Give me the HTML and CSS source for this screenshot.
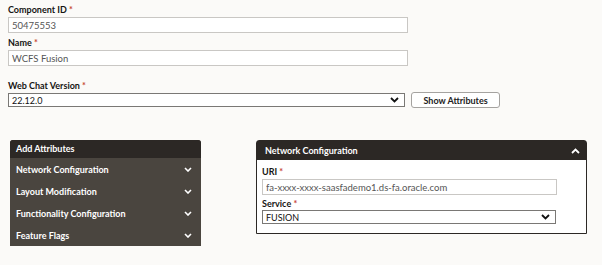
FILE: index.html
```html
<!DOCTYPE html>
<html lang="en">
<head>
<meta charset="UTF-8">
<title>Web Chat Settings</title>
<link rel="stylesheet" href="styles.css">
</head>
<body>

<div class="form">
    <div class="form-group">
        <label for="componentId">Component ID <span class="req">*</span></label>
        <input type="text" id="componentId" class="text-input" value="50475553">
    </div>
    <div class="form-group">
        <label for="name">Name <span class="req">*</span></label>
        <input type="text" id="name" class="text-input" value="WCFS Fusion">
    </div>
    <div class="form-group version-group">
        <label for="version">Web Chat Version <span class="req">*</span></label>
        <div class="version-row">
            <div class="select-box version-select">
                <span>22.12.0</span>
                <svg class="chev" width="9" height="6" viewBox="0 0 9 6"><path d="M1 1l3.5 3.5L8 1" fill="none" stroke="#111" stroke-width="1.8"/></svg>
            </div>
            <button type="button" class="show-btn">Show Attributes</button>
        </div>
    </div>
</div>

<div class="attributes">
    <div class="menu">
        <div class="menu-header">Add Attributes</div>
        <div class="menu-item">Network Configuration <svg class="chev" width="8" height="5" viewBox="0 0 8 5"><path d="M1 1l3 3 3-3" fill="none" stroke="#fff" stroke-width="1.6"/></svg></div>
        <div class="menu-item">Layout Modification <svg class="chev" width="8" height="5" viewBox="0 0 8 5"><path d="M1 1l3 3 3-3" fill="none" stroke="#fff" stroke-width="1.6"/></svg></div>
        <div class="menu-item">Functionality Configuration <svg class="chev" width="8" height="5" viewBox="0 0 8 5"><path d="M1 1l3 3 3-3" fill="none" stroke="#fff" stroke-width="1.6"/></svg></div>
        <div class="menu-item">Feature Flags <svg class="chev" width="8" height="5" viewBox="0 0 8 5"><path d="M1 1l3 3 3-3" fill="none" stroke="#fff" stroke-width="1.6"/></svg></div>
    </div>

    <div class="panel">
        <div class="panel-header">Network Configuration <svg class="chev" width="9" height="6" viewBox="0 0 9 6"><path d="M1 5l3.5-3.5L8 5" fill="none" stroke="#fff" stroke-width="1.8"/></svg></div>
        <div class="panel-body">
            <label for="uri">URI <span class="req">*</span></label>
            <input type="text" id="uri" class="text-input uri-input" value="fa-xxxx-xxxx-saasfademo1.ds-fa.oracle.com">
            <label>Service <span class="req">*</span></label>
            <div class="select-box service-select">
                <span>FUSION</span>
                <svg class="chev" width="9" height="6" viewBox="0 0 9 6"><path d="M1 1l3.5 3.5L8 1" fill="none" stroke="#111" stroke-width="1.8"/></svg>
            </div>
        </div>
    </div>
</div>

</body>
</html>
```
FILE: styles.css
```css
body {
    margin: 0;
    padding: 3px 8px 0 8px;
    background-color: #fbfaf8;
    font-family: Lato, "Open Sans", sans-serif;
    font-size: 9px;
    color: #222;
}

label {
    display: block;
    font-weight: bold;
    font-size: 9px;
    line-height: 13px;
    color: #161513;
}

.req {
    color: #c74634;
}

.form {
    width: 492px;
}

.form-group {
    margin-bottom: 3px;
}

.text-input {
    display: block;
    box-sizing: border-box;
    width: 400px;
    height: 16px;
    margin: 1px 0 0 0;
    padding: 0 3px;
    border: 1px solid #c9c7c4;
    background-color: #fff;
    font-family: Lato, sans-serif;
    font-size: 9.5px;
    color: #555;
    outline: none;
}

.version-group {
    margin-top: 13px;
}

.version-row {
    display: flex;
    align-items: center;
    gap: 6px;
}

.select-box {
    box-sizing: border-box;
    display: flex;
    align-items: center;
    justify-content: space-between;
    height: 14px;
    padding: 0 5px 0 3px;
    border: 1px solid #7a7875;
    background-color: #fff;
    font-size: 9px;
    color: #111;
}

.version-select {
    width: 398px;
}

.show-btn {
    box-sizing: border-box;
    width: 89px;
    height: 16px;
    padding: 0;
    border: 1px solid #a5a3a0;
    border-radius: 3px;
    background-color: #fff;
    font-family: Lato, sans-serif;
    font-weight: bold;
    font-size: 9px;
    color: #222;
}

.attributes {
    display: flex;
    align-items: flex-start;
    gap: 55px;
    margin-top: 32px;
    padding-left: 2px;
}

.menu {
    width: 191px;
    background-color: #4a453f;
    border-radius: 3px 3px 0 0;
    color: #fff;
    font-weight: bold;
}

.menu-header {
    height: 18px;
    line-height: 18px;
    padding-left: 6px;
    background-color: #2c2825;
    border-radius: 3px 3px 0 0;
}

.menu-item {
    display: flex;
    align-items: center;
    justify-content: space-between;
    height: 22px;
    padding: 0 9px 0 6px;
}

.panel {
    width: 331px;
    box-sizing: border-box;
    border: 1px solid #2c2825;
    border-radius: 3px 3px 0 0;
    background-color: #fff;
}

.panel-header {
    display: flex;
    align-items: center;
    justify-content: space-between;
    height: 19px;
    padding: 0 6px 0 8px;
    background-color: #2c2825;
    color: #fff;
    font-weight: bold;
}

.panel-body {
    padding: 5px 5px 9px 5px;
}

.panel-body .text-input {
    width: 295px;
    margin-bottom: 2px;
}

.service-select {
    width: 294px;
}
```
